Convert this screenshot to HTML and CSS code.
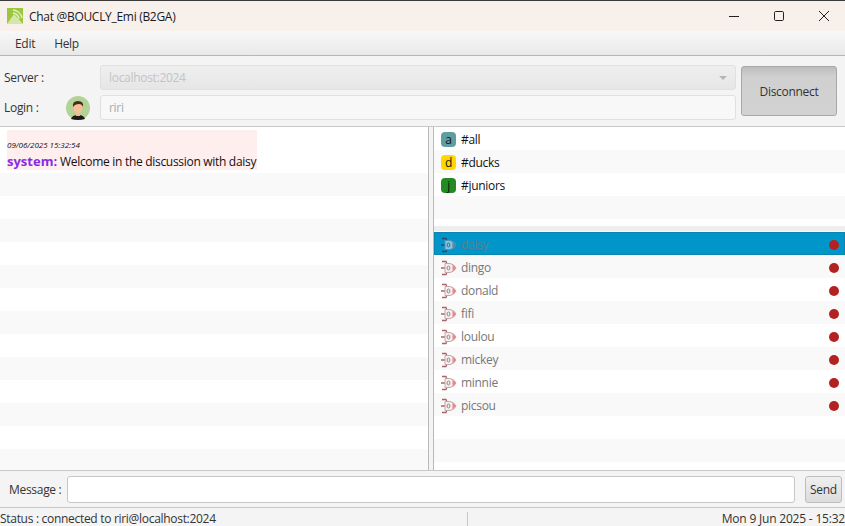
FILE: index.html
```html
<!DOCTYPE html>
<html>

<head>
  <title>Chat</title>
  <link rel="stylesheet" href="styles.css">
</head>

<body>
  <div class="window">
    <div class="titlebar">
      <svg class="app-icon" width="16" height="16" viewBox="0 0 16 16">
        <rect width="16" height="16" fill="#9cc63c"/>
        <path d="M0 16 L7 6 L16 16 Z" fill="#d5e6ab"/>
        <path d="M6 5 A7 7 0 0 1 12 11 M6 2 A10 10 0 0 1 15 10" fill="none" stroke="#e4f0c4" stroke-width="1.4"/>
      </svg>
      <span class="title">Chat @BOUCLY_Emi (B2GA)</span>
      <div class="controls">
        <svg width="12" height="12" viewBox="0 0 12 12"><path d="M1 6.5 H11" stroke="#222" stroke-width="1"/></svg>
        <svg width="12" height="12" viewBox="0 0 12 12"><rect x="1.5" y="1.5" width="9" height="9" rx="1.2" fill="none" stroke="#222"/></svg>
        <svg width="12" height="12" viewBox="0 0 12 12"><path d="M1 1 L11 11 M11 1 L1 11" stroke="#222"/></svg>
      </div>
    </div>

    <div class="menubar">
      <span>Edit</span>
      <span>Help</span>
    </div>

    <div class="toolbar">
      <div class="fields">
        <div class="field-row">
          <label>Server :</label>
          <div class="combo">localhost:2024<span class="arrow"></span></div>
        </div>
        <div class="field-row">
          <label>Login :</label>
          <svg class="avatar" width="24" height="24" viewBox="0 0 24 24">
            <circle cx="12" cy="12" r="12" fill="#b3d296"/>
            <path d="M5 23 Q6 19 12 19 Q18 19 19 23 Q12 25 5 23 Z" fill="#1d1a18"/>
            <rect x="10" y="15" width="4" height="5" fill="#f2b78e"/>
            <ellipse cx="12" cy="12" rx="4.5" ry="5.5" fill="#f6bf97"/>
            <path d="M7 11 Q6 5 12 5 Q18 5 17 11 Q16 8 13 8 Q9 8 7 11 Z" fill="#4a2a1c"/>
          </svg>
          <div class="text-box">riri</div>
        </div>
      </div>
      <button class="disconnect">Disconnect</button>
    </div>

    <div class="main">
      <div class="chat-pane">
        <div class="message-row">
          <div class="message">
            <div class="stamp">09/06/2025 15:32:54</div>
            <div class="message-text"><b class="sender">system:</b> Welcome in the discussion with daisy</div>
          </div>
        </div>
        <div class="row odd"></div>
        <div class="row"></div>
        <div class="row odd"></div>
        <div class="row"></div>
        <div class="row odd"></div>
        <div class="row"></div>
        <div class="row odd"></div>
        <div class="row"></div>
        <div class="row odd"></div>
        <div class="row"></div>
        <div class="row odd"></div>
        <div class="row"></div>
        <div class="row odd"></div>
      </div>

      <div class="side-pane">
        <div class="rooms">
          <div class="row"><span class="badge teal">a</span>#all</div>
          <div class="row odd"><span class="badge yellow">d</span>#ducks</div>
          <div class="row"><span class="badge green">j</span>#juniors</div>
          <div class="row odd"></div>
        </div>
        <div class="users">
          <div class="row user selected">
            <svg class="ship" width="16" height="16" viewBox="0 0 16 16"><use href="#ship-blue"/></svg>
            <span class="name">daisy</span><i class="dot"></i>
          </div>
          <div class="row user odd"><svg class="ship" width="16" height="16" viewBox="0 0 16 16"><use href="#ship-red"/></svg><span class="name">dingo</span><i class="dot"></i></div>
          <div class="row user"><svg class="ship" width="16" height="16" viewBox="0 0 16 16"><use href="#ship-red"/></svg><span class="name">donald</span><i class="dot"></i></div>
          <div class="row user odd"><svg class="ship" width="16" height="16" viewBox="0 0 16 16"><use href="#ship-red"/></svg><span class="name">fifi</span><i class="dot"></i></div>
          <div class="row user"><svg class="ship" width="16" height="16" viewBox="0 0 16 16"><use href="#ship-red"/></svg><span class="name">loulou</span><i class="dot"></i></div>
          <div class="row user odd"><svg class="ship" width="16" height="16" viewBox="0 0 16 16"><use href="#ship-red"/></svg><span class="name">mickey</span><i class="dot"></i></div>
          <div class="row user"><svg class="ship" width="16" height="16" viewBox="0 0 16 16"><use href="#ship-red"/></svg><span class="name">minnie</span><i class="dot"></i></div>
          <div class="row user odd"><svg class="ship" width="16" height="16" viewBox="0 0 16 16"><use href="#ship-red"/></svg><span class="name">picsou</span><i class="dot"></i></div>
          <div class="row"></div>
          <div class="row odd"></div>
        </div>
      </div>
    </div>

    <div class="message-bar">
      <label>Message :</label>
      <div class="message-input"></div>
      <button class="send">Send</button>
    </div>

    <div class="statusbar">
      <span class="status-left">Status : connected to riri@localhost:2024</span>
      <span class="status-right">Mon 9 Jun 2025 - 15:32</span>
    </div>
  </div>

  <svg width="0" height="0" class="defs">
    <symbol id="ship-red" viewBox="0 0 16 16">
      <path d="M0 8 H4 M1 1.5 H5 L6 4 M1 14.5 H5 L6 12" fill="none" stroke="#a8666c" stroke-width="1.3"/>
      <path d="M4 3.5 H9 Q13 4 15 8 Q13 12 9 12.5 H4 Z" fill="#f4eeee" stroke="#c9a6a6"/>
      <path d="M11.5 4.5 Q14 6 15 8 Q14 10 11.5 11.5 Z" fill="#e8888c"/>
      <ellipse cx="7.5" cy="8" rx="1.4" ry="2" fill="none" stroke="#8c8c8c"/>
    </symbol>
    <symbol id="ship-blue" viewBox="0 0 16 16">
      <path d="M0 8 H4 M1 1.5 H5 L6 4 M1 14.5 H5 L6 12" fill="none" stroke="#274a72" stroke-width="1.3"/>
      <path d="M4 3.5 H9 Q13 4 15 8 Q13 12 9 12.5 H4 Z" fill="#7fc6e2" stroke="#5a8fb0"/>
      <path d="M11.5 4.5 Q14 6 15 8 Q14 10 11.5 11.5 Z" fill="#6c7f9c"/>
      <ellipse cx="7.5" cy="8" rx="1.4" ry="2" fill="none" stroke="#2f6f96"/>
    </symbol>
  </svg>
</body>

</html>
```

FILE: styles.css
```css
/* Global styles */
html,
body {
  margin: 0;
  height: 100%;
  overflow: hidden;
}

body {
  font-family: 'Open Sans', 'Noto Sans', sans-serif;
  font-size: 12px;
  letter-spacing: -0.3px;
  color: #333333;
  background-color: #f4f4f4;
}

.defs {
  display: block;
  height: 0;
}

.window {
  display: flex;
  flex-direction: column;
  height: 526px;
}

/* Title bar */
.titlebar {
  display: flex;
  align-items: center;
  height: 30px;
  border-top: 1px solid #3a3a3a;
  background-color: #f8f0eb;
  color: #1a1a1a;
}

.app-icon {
  margin-left: 7px;
  margin-right: 6px;
}

.controls {
  display: flex;
  gap: 33px;
  margin-left: auto;
  margin-right: 15px;
}

/* Menu bar */
.menubar {
  display: flex;
  gap: 19px;
  align-items: center;
  height: 24px;
  padding-left: 15px;
  background: linear-gradient(#f8f8f8, #e9e9e9);
  border-bottom: 1px solid #b5b5b5;
}

/* Top toolbar */
.toolbar {
  display: flex;
  height: 70px;
  background-color: #f4f4f4;
  border-bottom: 1px solid #c8c8c8;
}

.fields {
  display: flex;
  flex-direction: column;
  gap: 5px;
  width: 736px;
  padding-top: 9px;
}

.field-row {
  display: flex;
  align-items: center;
  height: 25px;
}

.field-row label {
  width: 100px;
  padding-left: 4px;
  box-sizing: border-box;
}

.combo,
.text-box {
  flex: 1;
  display: flex;
  align-items: center;
  height: 25px;
  box-sizing: border-box;
  padding-left: 8px;
  border: 1px solid #e0e0e0;
  border-radius: 3px;
  color: #bdbdbd;
}

.combo {
  background: linear-gradient(#efefef, #e6e6e6);
  color: #c4c4c4;
}

.text-box {
  background-color: #f8f8f8;
  color: #aaaaaa;
}

.arrow {
  margin-left: auto;
  margin-right: 8px;
  border-left: 4px solid transparent;
  border-right: 4px solid transparent;
  border-top: 4px solid #b5b5b5;
}

.avatar {
  position: relative;
  margin-left: -34px;
  margin-right: 10px;
}

.disconnect {
  width: 96px;
  height: 50px;
  margin: 10px 0 0 5px;
  border: 1px solid #a8a8a8;
  border-radius: 3px;
  background: linear-gradient(#bdbdbd, #d0d0d0 20%, #d2d2d2);
  font-family: inherit;
  font-size: 12px;
  letter-spacing: inherit;
  color: #333333;
}

/* Main area */
.main {
  display: flex;
  height: 343px;
  overflow: hidden;
}

.chat-pane {
  width: 428px;
  background-color: #ffffff;
  border-right: 1px solid #b9b9b9;
  flex-shrink: 0;
}

.row {
  display: flex;
  align-items: center;
  height: 23px;
  background-color: #ffffff;
  color: #111111;
}

.row.odd {
  background-color: #f9f9f9;
}

.message-row {
  height: 46px;
  padding: 3px 0 0 7px;
  box-sizing: border-box;
}

.message {
  width: 250px;
  height: 40px;
  padding-top: 9px;
  box-sizing: border-box;
  background-color: #ffeeee;
  color: #111111;
  white-space: nowrap;
}

.stamp {
  font-size: 8px;
  font-style: italic;
  line-height: 12px;
  letter-spacing: -0.03px;
  margin-bottom: 1px;
}

.sender {
  font-size: 13px;
  letter-spacing: 0;
  color: #8a2be2;
}

.side-pane {
  flex: 1;
  margin-left: 4px;
  border-left: 1px solid #b9b9b9;
  background-color: #ffffff;
}

.side-pane .row {
  box-sizing: border-box;
  padding-top: 2px;
}

.rooms {
  height: 99px;
  overflow: hidden;
}

.rooms .row {
  padding-left: 7px;
}

.badge {
  width: 15px;
  height: 15px;
  margin-right: 5px;
  border-radius: 4px;
  text-align: center;
  line-height: 15px;
  color: #111111;
}

.teal {
  background-color: #5f9ea0;
}

.yellow {
  background-color: #ffd700;
}

.green {
  background-color: #228b22;
}

.users {
  border-top: 5px solid #eeeeee;
  padding-top: 1px;
}

.user {
  padding-left: 7px;
  padding-right: 6px;
  color: #777777;
}

.side-pane .user {
  color: #777777;
}

.user .ship {
  margin-right: 4px;
}

.user .name {
  flex: 1;
}

.side-pane .user.selected {
  background-color: #0096c9;
  color: #5f7f90;
  outline: 1px solid #0a84b0;
  outline-offset: -1px;
}

.dot {
  width: 10px;
  height: 10px;
  border-radius: 50%;
  background-color: #b22222;
}

/* Message bar */
.message-bar {
  display: flex;
  align-items: center;
  height: 38px;
  border-top: 1px solid #c8c8c8;
  border-bottom: 1px solid #c8c8c8;
  box-sizing: border-box;
  padding: 0 3px 0 9px;
  background-color: #f4f4f4;
}

.message-bar label {
  margin-right: 6px;
}

.message-input {
  flex: 1;
  height: 27px;
  box-sizing: border-box;
  border: 1px solid #c6c6c6;
  border-radius: 3px;
  background-color: #ffffff;
}

.send {
  width: 37px;
  height: 27px;
  margin-left: 10px;
  padding: 0;
  border: 1px solid #bdbdbd;
  border-radius: 3px;
  background: linear-gradient(#efefef, #dcdcdc);
  font-family: inherit;
  font-size: 12px;
  letter-spacing: inherit;
  color: #333333;
}

/* Status bar */
.statusbar {
  display: flex;
  justify-content: space-between;
  align-items: flex-end;
  height: 18px;
  white-space: nowrap;
}

.status-left {
  width: 467px;
  height: 14px;
  line-height: 14px;
  border-right: 1px solid #c8c8c8;
}

.status-right {
  height: 14px;
  line-height: 14px;
  letter-spacing: -0.2px;
}
```
